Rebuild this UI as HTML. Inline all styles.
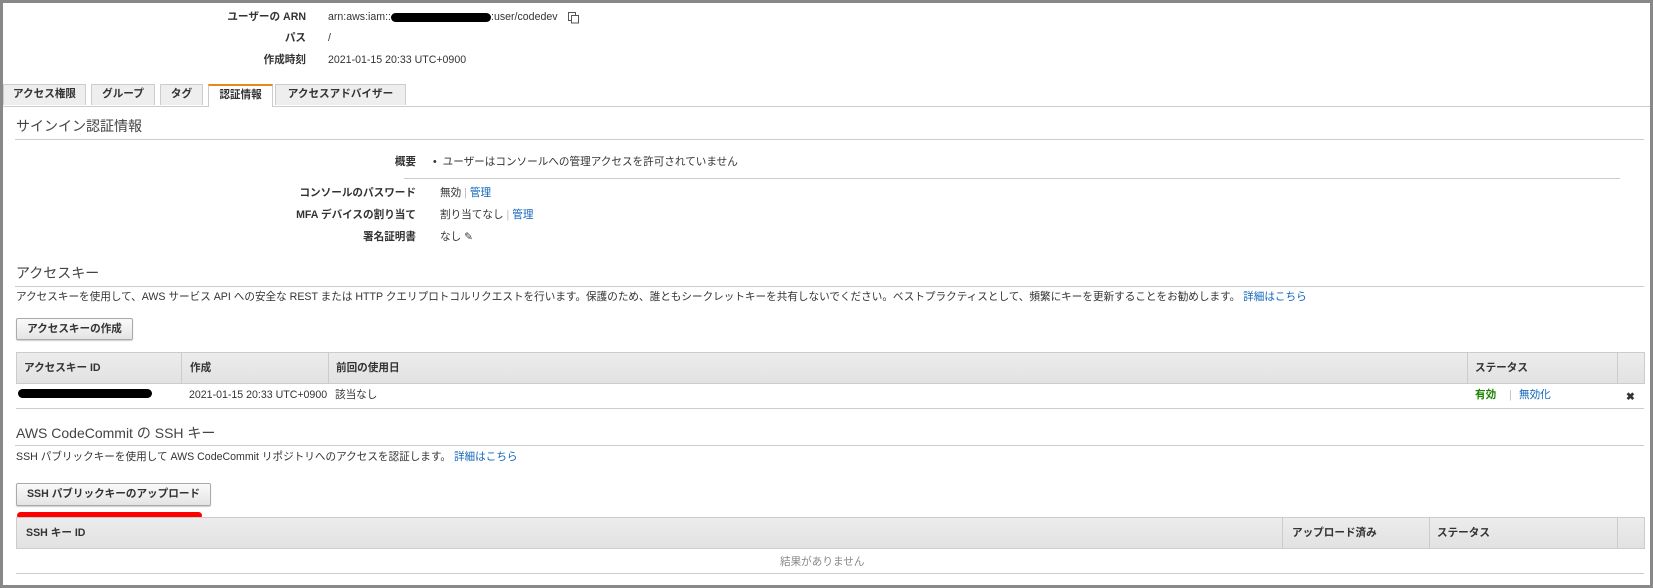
<!DOCTYPE html>
<html><head><meta charset="utf-8"><style>
*{margin:0;padding:0;box-sizing:border-box}
body{width:1653px;height:588px;overflow:hidden;background:#fff;font-family:"Liberation Sans","Noto Sans CJK JP",sans-serif;font-size:10.6px;color:#333;position:relative}
#frame{position:absolute;left:0;top:0;width:1653px;height:588px;border:3px solid #888}
.a{position:absolute;white-space:nowrap;line-height:14px}
.b{font-weight:bold}
.r{text-align:right}
.l{color:#1066bb}
.h{font-size:14px;line-height:18px;color:#444}
.hl{position:absolute;height:1px;background:#ccc}
.tab{position:absolute;top:84px;height:21px;background:#eee;border:1px solid #ccc;border-bottom:none;font-weight:bold;text-align:center;line-height:19px;color:#333;white-space:nowrap}
.btn{position:absolute;border:1px solid #aaa;border-radius:2px;background:linear-gradient(#fafafa,#e4e4e4);font-weight:bold;text-align:center;line-height:20px;box-shadow:0 1px 1px #ccc;white-space:nowrap}
.th{position:absolute;left:16px;width:1628px;background:linear-gradient(#ececec,#e2e2e2);border-top:1px solid #ccc;border-bottom:1px solid #ccc}
.vl{position:absolute;width:1px;background:#ccc}
</style></head><body>
<div id="frame"></div>

<div class="a b r" style="right:1347px;top:10px">ユーザーの ARN</div>
<div class="a" style="left:328px;top:10px">arn:aws:iam::<span style="display:inline-block;width:100px;height:9px;background:#000;border-radius:5px;vertical-align:middle"></span>:user/codedev <svg style="vertical-align:middle;margin-left:6px" width="13" height="13" viewBox="0 0 13 13"><rect x="1.5" y="1.5" width="7" height="8" fill="#fff" stroke="#555"/><rect x="4.5" y="4.5" width="7" height="7.5" fill="#fff" stroke="#555"/></svg></div>
<div class="a b r" style="right:1347px;top:31px">パス</div>
<div class="a" style="left:328px;top:31px">/</div>
<div class="a b r" style="right:1347px;top:53px">作成時刻</div>
<div class="a" style="left:328px;top:53px">2021-01-15 20:33 UTC+0900</div>

<div class="tab" style="left:3px;width:83px">アクセス権限</div>
<div class="tab" style="left:91px;width:64px">グループ</div>
<div class="tab" style="left:160px;width:43px">タグ</div>
<div class="tab" style="left:208px;width:65px;background:#fff;border-top:2px solid #e88a1a;height:23px;z-index:2">認証情報</div>
<div class="tab" style="left:275px;width:131px">アクセスアドバイザー</div>
<div class="hl" style="left:3px;width:1647px;top:106px"></div>

<div class="a h" style="left:16px;top:117px">サインイン認証情報</div>
<div class="hl" style="left:15px;width:1629px;top:139px"></div>

<div class="a b r" style="right:1237px;top:155px">概要</div>
<div class="a" style="left:433px;top:155px">•&nbsp;&nbsp;ユーザーはコンソールへの管理アクセスを許可されていません</div>
<div class="hl" style="left:404px;width:1216px;top:178px"></div>
<div class="a b r" style="right:1237px;top:186px">コンソールのパスワード</div>
<div class="a" style="left:440px;top:186px">無効 <span style="color:#bbb">|</span> <span class="l">管理</span></div>
<div class="a b r" style="right:1237px;top:208px">MFA デバイスの割り当て</div>
<div class="a" style="left:440px;top:208px">割り当てなし <span style="color:#bbb">|</span> <span class="l">管理</span></div>
<div class="a b r" style="right:1237px;top:230px">署名証明書</div>
<div class="a" style="left:440px;top:230px">なし ✎</div>

<div class="a h" style="left:16px;top:264px">アクセスキー</div>
<div class="hl" style="left:15px;width:1629px;top:286px"></div>
<div class="a" style="left:16px;top:290px">アクセスキーを使用して、AWS サービス API への安全な REST または HTTP クエリプロトコルリクエストを行います。保護のため、誰ともシークレットキーを共有しないでください。ベストプラクティスとして、頻繁にキーを更新することをお勧めします。 <span class="l">詳細はこちら</span></div>
<div class="btn" style="left:16px;top:318px;width:117px;height:22px">アクセスキーの作成</div>

<div class="th" style="top:352px;height:32px"></div>
<div class="vl" style="left:16px;top:352px;height:32px"></div>
<div class="vl" style="left:181px;top:352px;height:32px"></div>
<div class="vl" style="left:328px;top:352px;height:32px"></div>
<div class="vl" style="left:1467px;top:352px;height:32px"></div>
<div class="vl" style="left:1617px;top:352px;height:32px"></div>
<div class="vl" style="left:1644px;top:352px;height:32px"></div>
<div class="a b" style="left:24px;top:361px">アクセスキー ID</div>
<div class="a b" style="left:190px;top:361px">作成</div>
<div class="a b" style="left:336px;top:361px">前回の使用日</div>
<div class="a b" style="left:1475px;top:361px">ステータス</div>
<div class="a" style="left:18px;top:389px;width:134px;height:9px;background:#000;border-radius:5px"></div>
<div class="a" style="left:189px;top:388px">2021-01-15 20:33 UTC+0900</div>
<div class="a" style="left:335px;top:388px">該当なし</div>
<div class="a b" style="left:1475px;top:388px;color:#1d8102">有効</div>
<div class="a" style="left:1509px;top:388px;color:#bbb">|</div>
<div class="a l" style="left:1519px;top:388px">無効化</div>
<div class="a b" style="left:1626px;top:390px;color:#333">✖</div>
<div class="hl" style="left:16px;width:1628px;top:408px"></div>

<div class="a h" style="left:16px;top:424px">AWS CodeCommit の SSH キー</div>
<div class="hl" style="left:15px;width:1629px;top:445px"></div>
<div class="a" style="left:16px;top:450px">SSH パブリックキーを使用して AWS CodeCommit リポジトリへのアクセスを認証します。 <span class="l">詳細はこちら</span></div>
<div class="btn" style="left:16px;top:483px;width:195px;height:23px">SSH パブリックキーのアップロード</div>
<div class="a" style="left:17px;top:512px;width:185px;height:7px;background:#f00;border-radius:4px"></div>

<div class="th" style="top:517px;height:32px"></div>
<div class="vl" style="left:16px;top:517px;height:32px"></div>
<div class="vl" style="left:1282px;top:517px;height:32px"></div>
<div class="vl" style="left:1429px;top:517px;height:32px"></div>
<div class="vl" style="left:1617px;top:517px;height:32px"></div>
<div class="vl" style="left:1644px;top:517px;height:32px"></div>
<div class="a b" style="left:26px;top:526px">SSH キー ID</div>
<div class="a b" style="left:1292px;top:526px">アップロード済み</div>
<div class="a b" style="left:1437px;top:526px">ステータス</div>
<div class="a" style="left:780px;top:555px;color:#888">結果がありません</div>
<div class="hl" style="left:16px;width:1628px;top:573px"></div>
</body></html>
